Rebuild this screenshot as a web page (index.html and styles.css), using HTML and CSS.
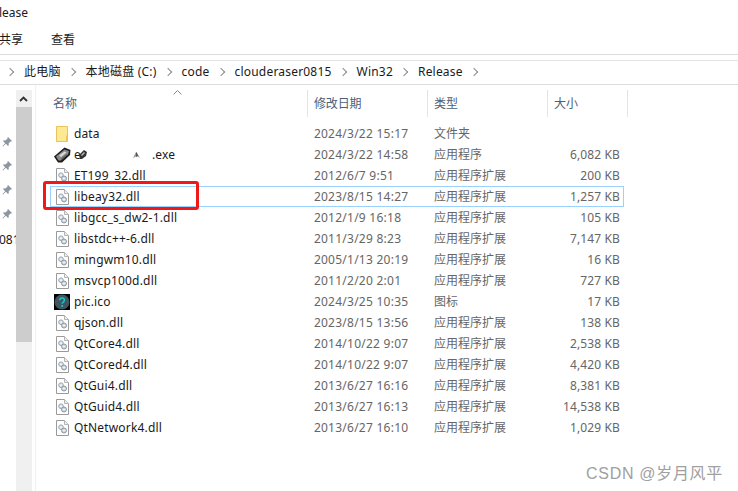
FILE: index.html
```html
<!DOCTYPE html>
<html lang="zh-CN">
<head>
<meta charset="utf-8">
<title>Release</title>
<link rel="stylesheet" href="styles.css">
</head>
<body>
<svg class="defs" width="0" height="0" aria-hidden="true">
  <defs>
    <symbol id="dll" viewBox="0 0 13 16">
      <path d="M.5.5h8l4 4v11H.5z" fill="#fff" stroke="#9a9a9a"/>
      <path d="M8.500.5v4h4" fill="#eee" stroke="#b5b5b5"/>
      <circle cx="5" cy="7.200" r="2.300" fill="#dfe5ea" stroke="#97a3ad"/>
      <circle cx="8" cy="10.500" r="2.500" fill="#cfd7de" stroke="#8a97a3"/>
      <circle cx="5" cy="7.200" r=".7" fill="#fff"/>
      <circle cx="8" cy="10.500" r=".8" fill="#fff"/>
    </symbol>
    <symbol id="pin" viewBox="0 0 10 11">
      <path d="M6 0l4 4-1 .7-.6-.3L6.600 6.600l.2 1.700-.8.700-2.200-2.200L1 9.500l-.5-.5 2.700-2.800L1 4l.7-.8 1.700.2 2.200-1.800-.3-.6z" fill="#8b96a0"/>
    </symbol>
  </defs>
</svg>
<div class="window">
  <div class="title">lease</div>
  <div class="tabs"><span class="tab-share">共享</span><span>查看</span></div>
  <div class="address">
    <span class="crumb">此电脑</span>
    <span class="crumb">本地磁盘 (C:)</span>
    <span class="crumb">code</span>
    <span class="crumb">clouderaser0815</span>
    <span class="crumb">Win32</span>
    <span class="crumb">Release</span>
    <span class="crumb"></span>
  </div>
  <div class="body">
    <div class="nav">
      <svg class="pin"><use href="#pin"/></svg>
      <svg class="pin"><use href="#pin"/></svg>
      <svg class="pin"><use href="#pin"/></svg>
      <svg class="pin"><use href="#pin"/></svg>
      <div class="nav-text">081</div>
    </div>
    <div class="scrollbar">
      <div class="scroll-up"><svg viewBox="0 0 9 6" width="9" height="6"><path d="M1 5l3.500-3.500L8 5" fill="none" stroke="#333" stroke-width="1.800"/></svg></div>
      <div class="scroll-thumb"></div>
    </div>
    <div class="list">
      <svg class="sort" viewBox="0 0 9 5" width="9" height="5"><path d="M.5 4.500l4-4 4 4" fill="none" stroke="#8a8a8a"/></svg>
      <div class="head">
        <div class="hcell h-name">名称</div>
        <div class="hcell h-date">修改日期</div>
        <div class="hcell h-type">类型</div>
        <div class="hcell h-size">大小</div>
      </div>
      <div class="rows">
        <div class="row">
          <span class="ico"><svg width="13" height="16" viewBox="0 0 13 16"><path d="M.5.500h11v15H.5z" fill="#fde992" stroke="#e9c45a"/><path d="M10 9.500v5.500h1.500V9.500z" fill="#eec45c"/></svg></span>
          <span class="name">data</span><span class="date">2024/3/22 15:17</span><span class="type">文件夹</span><span class="size"></span>
        </div>
        <div class="row">
          <span class="ico ico-exe"><svg width="17" height="16" viewBox="0 0 17 16"><path d="M0 9.500L10.500.5l6 2.500-.5 5-8 7.500H4z" fill="#1c1c1c"/><path d="M2 9.500L10.500 2.500l4.500 1.500-1 3.500-7 6H4.500z" fill="#8a8a8a"/><path d="M5 8.500L10.500 4.500l2 1-5.500 4.500z" fill="#dadada"/><path d="M7 12l6-5 .5 1-6 5z" fill="#555"/></svg></span>
          <span class="name name-exe"><span class="exe-a">e<svg class="blot" width="8" height="9" viewBox="0 0 8 9"><path d="M0 5l5-5 3 2-1 4-4 3H1z" fill="#333"/><path d="M2 5l3-3 1 1-3 3z" fill="#bbb"/></svg></span><span class="exe-mark"><svg width="9" height="8" viewBox="0 0 9 8"><path d="M1 7l3-6 1 1 3 5-3-2z" fill="#999"/><path d="M4 1l1 1 1 3-2 1z" fill="#555"/></svg></span><span class="exe-b">.exe</span></span><span class="date">2024/3/22 14:58</span><span class="type">应用程序</span><span class="size">6,082 KB</span>
        </div>
        <div class="row">
          <span class="ico"><svg width="13" height="16"><use href="#dll"/></svg></span>
          <span class="name">ET199_32.dll</span><span class="date">2012/6/7 9:51</span><span class="type">应用程序扩展</span><span class="size">200 KB</span>
        </div>
        <div class="row row-hover">
          <span class="ico"><svg width="13" height="16"><use href="#dll"/></svg></span>
          <span class="name">libeay32.dll</span><span class="date">2023/8/15 14:27</span><span class="type">应用程序扩展</span><span class="size">1,257 KB</span>
          <span class="red-box"></span>
        </div>
        <div class="row">
          <span class="ico"><svg width="13" height="16"><use href="#dll"/></svg></span>
          <span class="name">libgcc_s_dw2-1.dll</span><span class="date">2012/1/9 16:18</span><span class="type">应用程序扩展</span><span class="size">105 KB</span>
        </div>
        <div class="row">
          <span class="ico"><svg width="13" height="16"><use href="#dll"/></svg></span>
          <span class="name">libstdc++-6.dll</span><span class="date">2011/3/29 8:23</span><span class="type">应用程序扩展</span><span class="size">7,147 KB</span>
        </div>
        <div class="row">
          <span class="ico"><svg width="13" height="16"><use href="#dll"/></svg></span>
          <span class="name">mingwm10.dll</span><span class="date">2005/1/13 20:19</span><span class="type">应用程序扩展</span><span class="size">16 KB</span>
        </div>
        <div class="row">
          <span class="ico"><svg width="13" height="16"><use href="#dll"/></svg></span>
          <span class="name">msvcp100d.dll</span><span class="date">2011/2/20 2:01</span><span class="type">应用程序扩展</span><span class="size">727 KB</span>
        </div>
        <div class="row">
          <span class="ico ico-pic"><svg width="16" height="16" viewBox="0 0 16 16"><rect width="16" height="16" fill="#000"/><circle cx="8" cy="8" r="7.500" fill="#3f5560"/><path d="M5.800 6.200c0-3 4.600-3 4.600 0 0 1.800-2.200 1.800-2.200 3.600" fill="none" stroke="#12c7c9" stroke-width="1.600"/><rect x="7.300" y="11" width="1.800" height="1.800" fill="#12c7c9"/></svg></span>
          <span class="name">pic.ico</span><span class="date">2024/3/25 10:35</span><span class="type">图标</span><span class="size">17 KB</span>
        </div>
        <div class="row">
          <span class="ico"><svg width="13" height="16"><use href="#dll"/></svg></span>
          <span class="name">qjson.dll</span><span class="date">2023/8/15 13:56</span><span class="type">应用程序扩展</span><span class="size">138 KB</span>
        </div>
        <div class="row">
          <span class="ico"><svg width="13" height="16"><use href="#dll"/></svg></span>
          <span class="name">QtCore4.dll</span><span class="date">2014/10/22 9:07</span><span class="type">应用程序扩展</span><span class="size">2,538 KB</span>
        </div>
        <div class="row">
          <span class="ico"><svg width="13" height="16"><use href="#dll"/></svg></span>
          <span class="name">QtCored4.dll</span><span class="date">2014/10/22 9:07</span><span class="type">应用程序扩展</span><span class="size">4,420 KB</span>
        </div>
        <div class="row">
          <span class="ico"><svg width="13" height="16"><use href="#dll"/></svg></span>
          <span class="name">QtGui4.dll</span><span class="date">2013/6/27 16:16</span><span class="type">应用程序扩展</span><span class="size">8,381 KB</span>
        </div>
        <div class="row">
          <span class="ico"><svg width="13" height="16"><use href="#dll"/></svg></span>
          <span class="name">QtGuid4.dll</span><span class="date">2013/6/27 16:13</span><span class="type">应用程序扩展</span><span class="size">14,538 KB</span>
        </div>
        <div class="row">
          <span class="ico"><svg width="13" height="16"><use href="#dll"/></svg></span>
          <span class="name">QtNetwork4.dll</span><span class="date">2013/6/27 16:10</span><span class="type">应用程序扩展</span><span class="size">1,029 KB</span>
        </div>
      </div>
    </div>
  </div>
  <div class="watermark">CSDN @岁月风平</div>
</div>
</body>
</html>
```

FILE: styles.css
```css
* { box-sizing: border-box; }
html, body { margin: 0; padding: 0; background: #fff; }
.defs { position: absolute; }
.window {
  position: relative;
  width: 738px;
  height: 491px;
  overflow: hidden;
  font-family: "Noto Sans", "Noto Sans CJK SC", sans-serif;
  font-size: 12px;
  line-height: 16px;
  color: #1a1a1a;
  background: #fff;
}
.title { height: 27px; padding-top: 5px; margin-left: -1px; }
.tabs { height: 27px; padding-top: 5px; display: flex; }
.tab-share { width: 52px; margin-left: -1px; }
.address {
  height: 29px;
  border-top: 1px solid #dcdcdc;
  padding: 9px 0 0 7px;
  display: flex;
  position: relative;
}
.address::after {
  content: "";
  position: absolute;
  left: 0;
  right: 0;
  top: 5px;
  height: 23px;
  border-top: 1px solid #e4e4e4;
  border-bottom: 1px solid #dcdcdc;
}
.crumb { display: flex; align-items: center; height: 16px; white-space: nowrap; letter-spacing: .2px; }
.crumb::before {
  content: "";
  width: 5px;
  height: 5px;
  border-top: 1.500px solid #8a8a8a;
  border-right: 1.500px solid #8a8a8a;
  transform: rotate(45deg);
  margin-right: 11px;
}
.crumb + .crumb { margin-left: 8px; }
.body { display: flex; height: 408px; }
.nav { width: 16px; padding-top: 54px; display: flex; flex-direction: column; align-items: flex-start; overflow: hidden; }
.pin { width: 10px; height: 11px; margin: 0 0 13px 2px; flex: none; }
.nav-text { margin-top: -1px; margin-left: -1px; }
.scrollbar { width: 16px; background: #f0f0f0; margin-top: 7px; }
.scroll-up { height: 17px; display: flex; align-items: center; justify-content: center; }
.scroll-thumb { height: 235px; background: #cdcdcd; }
.list { position: relative; width: 706px; border-left: 1px solid #f1f1f1; margin-left: 3px; }
.sort { position: absolute; left: 137px; top: 7px; }
.head { display: flex; height: 27px; margin-top: 7px; color: #4c607a; }
.hcell { padding-top: 6px; border-right: 1px solid #e5e5e5; flex: none; }
.h-name { width: 272px; padding-left: 17px; }
.h-date { width: 120px; padding-left: 6px; letter-spacing: -.1px; }
.h-type { width: 120px; padding-left: 6px; }
.h-size { width: 80px; padding-left: 6px; }
.rows { padding-top: 6px; }
.row { position: relative; display: flex; align-items: center; height: 21px; color: #666; }
.row-hover { margin-left: 14px; width: 574px; border: 1px solid #99d1ff; }
.row-hover .ico { margin-left: 5px; }
.ico { width: 18px; margin-left: 20px; flex: none; display: flex; align-items: center; }
.ico-exe { margin-left: 18px; width: 20px; }
.ico-pic { margin-left: 18px; width: 20px; }
.name { width: 240px; flex: none; color: #1a1a1a; letter-spacing: .18px; }
.date { width: 120px; flex: none; letter-spacing: .25px; }
.type { width: 100px; flex: none; }
.size { width: 86px; flex: none; text-align: right; letter-spacing: .1px; }
.name-exe { display: flex; align-items: center; }
.exe-a { width: 58px; display: flex; align-items: center; }
.blot { margin-left: -2px; }
.exe-mark { width: 20px; display: flex; align-items: center; }
.red-box {
  position: absolute;
  left: -8px;
  top: -6px;
  width: 156px;
  height: 29px;
  border: 3px solid #f01818;
  border-radius: 3px;
}
.watermark {
  position: absolute;
  left: 586px;
  top: 464px;
  font-family: "Liberation Sans", "Noto Sans CJK SC", sans-serif;
  font-size: 16px;
  line-height: 20px;
  letter-spacing: .7px;
  color: #a0a0a0;
  white-space: nowrap;
}
```
